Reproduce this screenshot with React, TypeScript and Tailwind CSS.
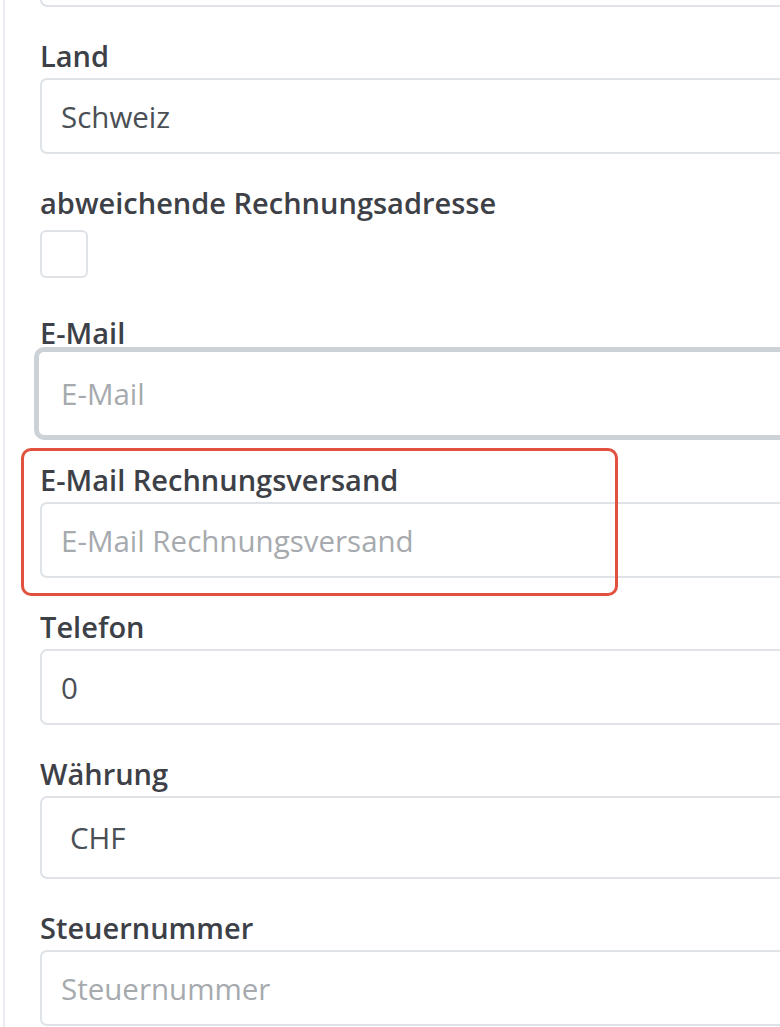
import { ReactNode } from "react";

const font = { fontFamily: '"Open Sans", "Liberation Sans", sans-serif' };

function Label({ children }: { children: ReactNode }) {
  return (
    <div className="h-8 flex items-center text-[29px] font-semibold text-[#3d4147] leading-none whitespace-nowrap">
      {children}
    </div>
  );
}

function Field({
  label,
  value,
  placeholder,
}: {
  label: string;
  value?: string;
  placeholder?: string;
}) {
  return (
    <div className="mb-[32px]">
      <Label>{label}</Label>
      <div className="mt-[7px] h-[76px] w-[760px] rounded-[7px] border-2 border-[#dfe2e6] bg-white flex items-center pl-[19px] pt-[2px] text-[29.5px] whitespace-nowrap">
        {value ? (
          <span className="text-[#4a4f55]">{value}</span>
        ) : (
          <span className="text-[#a6aaae]">{placeholder}</span>
        )}
      </div>
    </div>
  );
}

export default function App() {
  return (
    <div className="h-[1027px] w-[780px] overflow-hidden bg-white flex" style={font}>
      <div className="w-[3px] shrink-0" />
      <div className="w-[2px] shrink-0 bg-[#e9ebf0]" />
      <div className="flex-1 pl-[35px] -mt-[69px]">
        {/* field above, only its lower edge is in view */}
        <div className="mb-[32px] h-[76px] w-[760px] rounded-[7px] border-2 border-[#dfe2e6] bg-white" />

        <Field label="Land" value="Schweiz" />

        <div className="mb-[38px]">
          <Label>abweichende Rechnungsadresse</Label>
          <div className="mt-[12px] h-12 w-12 rounded-[6px] border-2 border-[#dfe2e6] bg-white" />
        </div>

        <div className="mb-[23px]">
          <Label>E-Mail</Label>
          <div className="-ml-[6px] mt-[-1px] w-[780px] rounded-[10px] border-[5px] border-[#cdd2d7] bg-white">
            <div className="h-[83px] flex items-center pl-[22px] pt-[2px] text-[29.5px] text-[#a6aaae]">
              E-Mail
            </div>
          </div>
        </div>

        <div className="relative">
          <div className="pointer-events-none absolute -left-[19px] -top-[15px] h-[148px] w-[597px] rounded-[10px] border-[3px] border-[#e2513f]" />
          <Field label="E-Mail Rechnungsversand" placeholder="E-Mail Rechnungsversand" />
        </div>

        <Field label="Telefon" value="0" />

        <div className="mb-[32px]">
          <Label>Währung</Label>
          <div className="mt-[7px] h-[83px] w-[760px] rounded-[7px] border-2 border-[#dfe2e6] bg-white flex items-center pl-[28px] pt-[2px] text-[29.5px] text-[#4a4f55]">
            CHF
          </div>
        </div>

        <Field label="Steuernummer" placeholder="Steuernummer" />
      </div>
    </div>
  );
}
